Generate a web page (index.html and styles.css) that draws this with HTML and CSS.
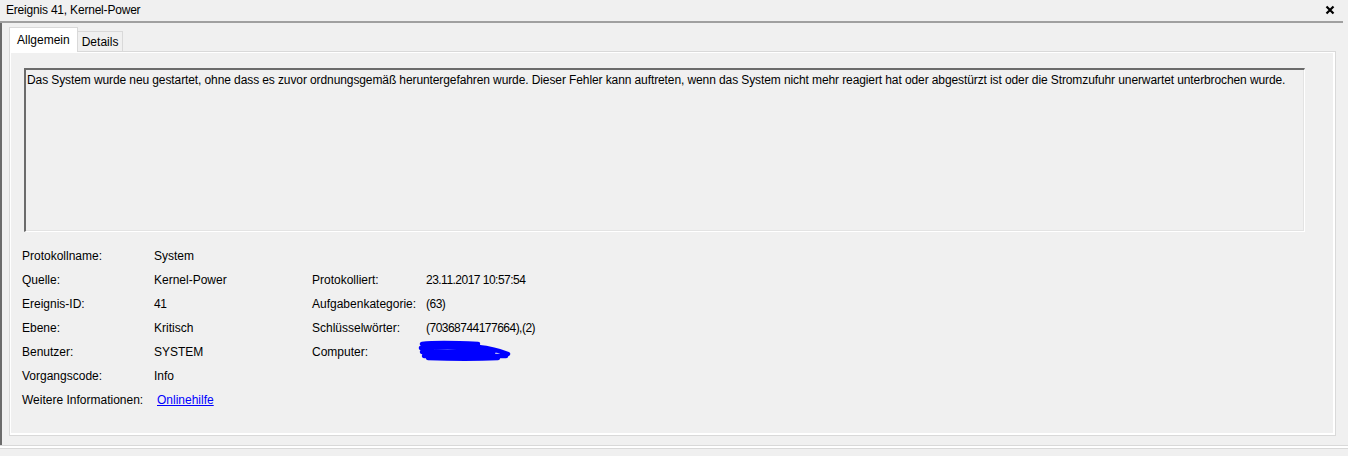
FILE: index.html
```html
<!DOCTYPE html>
<html lang="de">
<head>
<meta charset="utf-8">
<title>Ereignis 41, Kernel-Power</title>
<link rel="stylesheet" href="styles.css">
</head>
<body>
<div class="window">
  <div class="titlebar">
    <span class="title">Ereignis 41, Kernel-Power</span>
    <svg class="close" width="10" height="10" viewBox="0 0 10 10"><path d="M1.5 1.5 L8.5 8.5 M8.5 1.5 L1.5 8.5" stroke="#000" stroke-width="2.2" fill="none"/></svg>
  </div>
  <div class="titlerule"></div>
  <div class="body">
    <div class="edge"></div>
    <div class="content">
      <div class="tabs">
        <div class="tab active">Allgemein</div>
        <div class="tab">Details</div>
      </div>
      <div class="panel">
        <div class="desc">Das System wurde neu gestartet, ohne dass es zuvor ordnungsgemäß heruntergefahren wurde. Dieser Fehler kann auftreten, wenn das System nicht mehr reagiert hat oder abgestürzt ist oder die Stromzufuhr unerwartet unterbrochen wurde.</div>
        <div class="fields">
          <div class="lbl">Protokollname:</div><div class="val">System</div><div></div><div></div>
          <div class="lbl">Quelle:</div><div class="val">Kernel-Power</div><div class="lbl">Protokolliert:</div><div class="val num">23.11.2017 10:57:54</div>
          <div class="lbl">Ereignis-ID:</div><div class="val num">41</div><div class="lbl">Aufgabenkategorie:</div><div class="val num">(63)</div>
          <div class="lbl">Ebene:</div><div class="val">Kritisch</div><div class="lbl">Schlüsselwörter:</div><div class="val num">(70368744177664),(2)</div>
          <div class="lbl">Benutzer:</div><div class="val">SYSTEM</div><div class="lbl">Computer:</div>
          <div class="val"><svg class="scribble" width="96" height="22" viewBox="0 0 96 22"><path d="M4 4 C20 2 40 3 60 4 M3 8 C25 6 50 7 68 9 M4 12 C25 11 50 11 75 13 M6 16 C30 15 55 15 88 16 M60 7 C70 8 80 10 90 14 M10 18 C35 19 60 19 80 18" stroke="#0000ff" stroke-width="4.5" stroke-linecap="round" fill="none"/></svg></div>
          <div class="lbl">Vorgangscode:</div><div class="val">Info</div><div></div><div></div>
          <div class="lbl">Weitere Informationen:</div><div class="val"><a class="link" href="#">Onlinehilfe</a></div><div></div><div></div>
        </div>
      </div>
    </div>
  </div>
  <div class="footer"></div>
</div>
</body>
</html>
```

FILE: styles.css
```css
html, body {
  margin: 0;
  padding: 0;
  background: #f0f0f0;
}
body {
  font-family: "Liberation Sans", Arial, sans-serif;
  font-size: 12px;
  color: #000;
  width: 1348px;
  height: 456px;
  overflow: hidden;
}
.window {
  display: flex;
  flex-direction: column;
}
.titlebar {
  height: 21px;
  display: flex;
  align-items: center;
  justify-content: space-between;
  padding-left: 6px;
  padding-right: 13px;
  width: 1329px;
}
.title {
  line-height: 14px;
  margin-top: -1px;
  letter-spacing: -0.2px;
}
.close {
  display: block;
  margin-top: -1px;
}
.titlerule {
  width: 1343px;
  height: 2px;
  background: #a0a0a0;
}
.body {
  display: flex;
  height: 422px;
}
.edge {
  width: 2px;
  background: #6b6b6b;
}
.content {
  padding-left: 7px;
  padding-top: 5px;
  display: flex;
  flex-direction: column;
}
.tabs {
  display: flex;
  align-items: flex-end;
  height: 24px;
  margin-bottom: -1px;
  position: relative;
  z-index: 1;
}
.tab {
  height: 19px;
  line-height: 20px;
  padding: 0 4px 0 4px;
  border: 1px solid #d9d9d9;
  border-bottom: none;
  background: #f0f0f0;
  margin-left: -1px;
  margin-bottom: 1px;
}
.tab.active {
  height: 24px;
  line-height: 24px;
  padding: 0 7px 0 7px;
  background: #ffffff;
  margin-left: 0;
  margin-bottom: 0;
}
.panel {
  border: 1px solid #d9d9d9;
  box-shadow: inset 1px 1px 0 #fff, inset -2px -2px 0 #fff;
  padding: 16px 0 0 14px;
  box-sizing: content-box;
  width: 1311px;
  height: 367px;
}
.desc {
  width: 1277px;
  height: 158px;
  border-top: 2px solid #6b6b6b;
  border-left: 2px solid #6b6b6b;
  border-right: 1px solid #fff;
  border-bottom: 1px solid #fff;
  box-shadow: inset -1px -1px 0 #e3e3e3;
  padding: 3px 0 0 1px;
  line-height: 15px;
  letter-spacing: -0.1px;
  white-space: nowrap;
}
.fields {
  margin-top: 12px;
  margin-left: -2px;
  display: grid;
  grid-template-columns: 132px 158px 114px 300px;
  grid-auto-rows: 24px;
  align-items: center;
}
.val {
  display: flex;
  align-items: center;
}
.num {
  letter-spacing: -0.52px;
}
.scribble {
  display: block;
  margin-left: -8px;
  margin-top: -2px;
}
.link {
  color: #0000ff;
  text-decoration: underline;
  margin-left: 3px;
}
.footer {
  width: 1348px;
  height: 2px;
  border-top: 1px solid #d9d9d9;
  border-bottom: 1px solid #d9d9d9;
  background: #fff;
}
```
